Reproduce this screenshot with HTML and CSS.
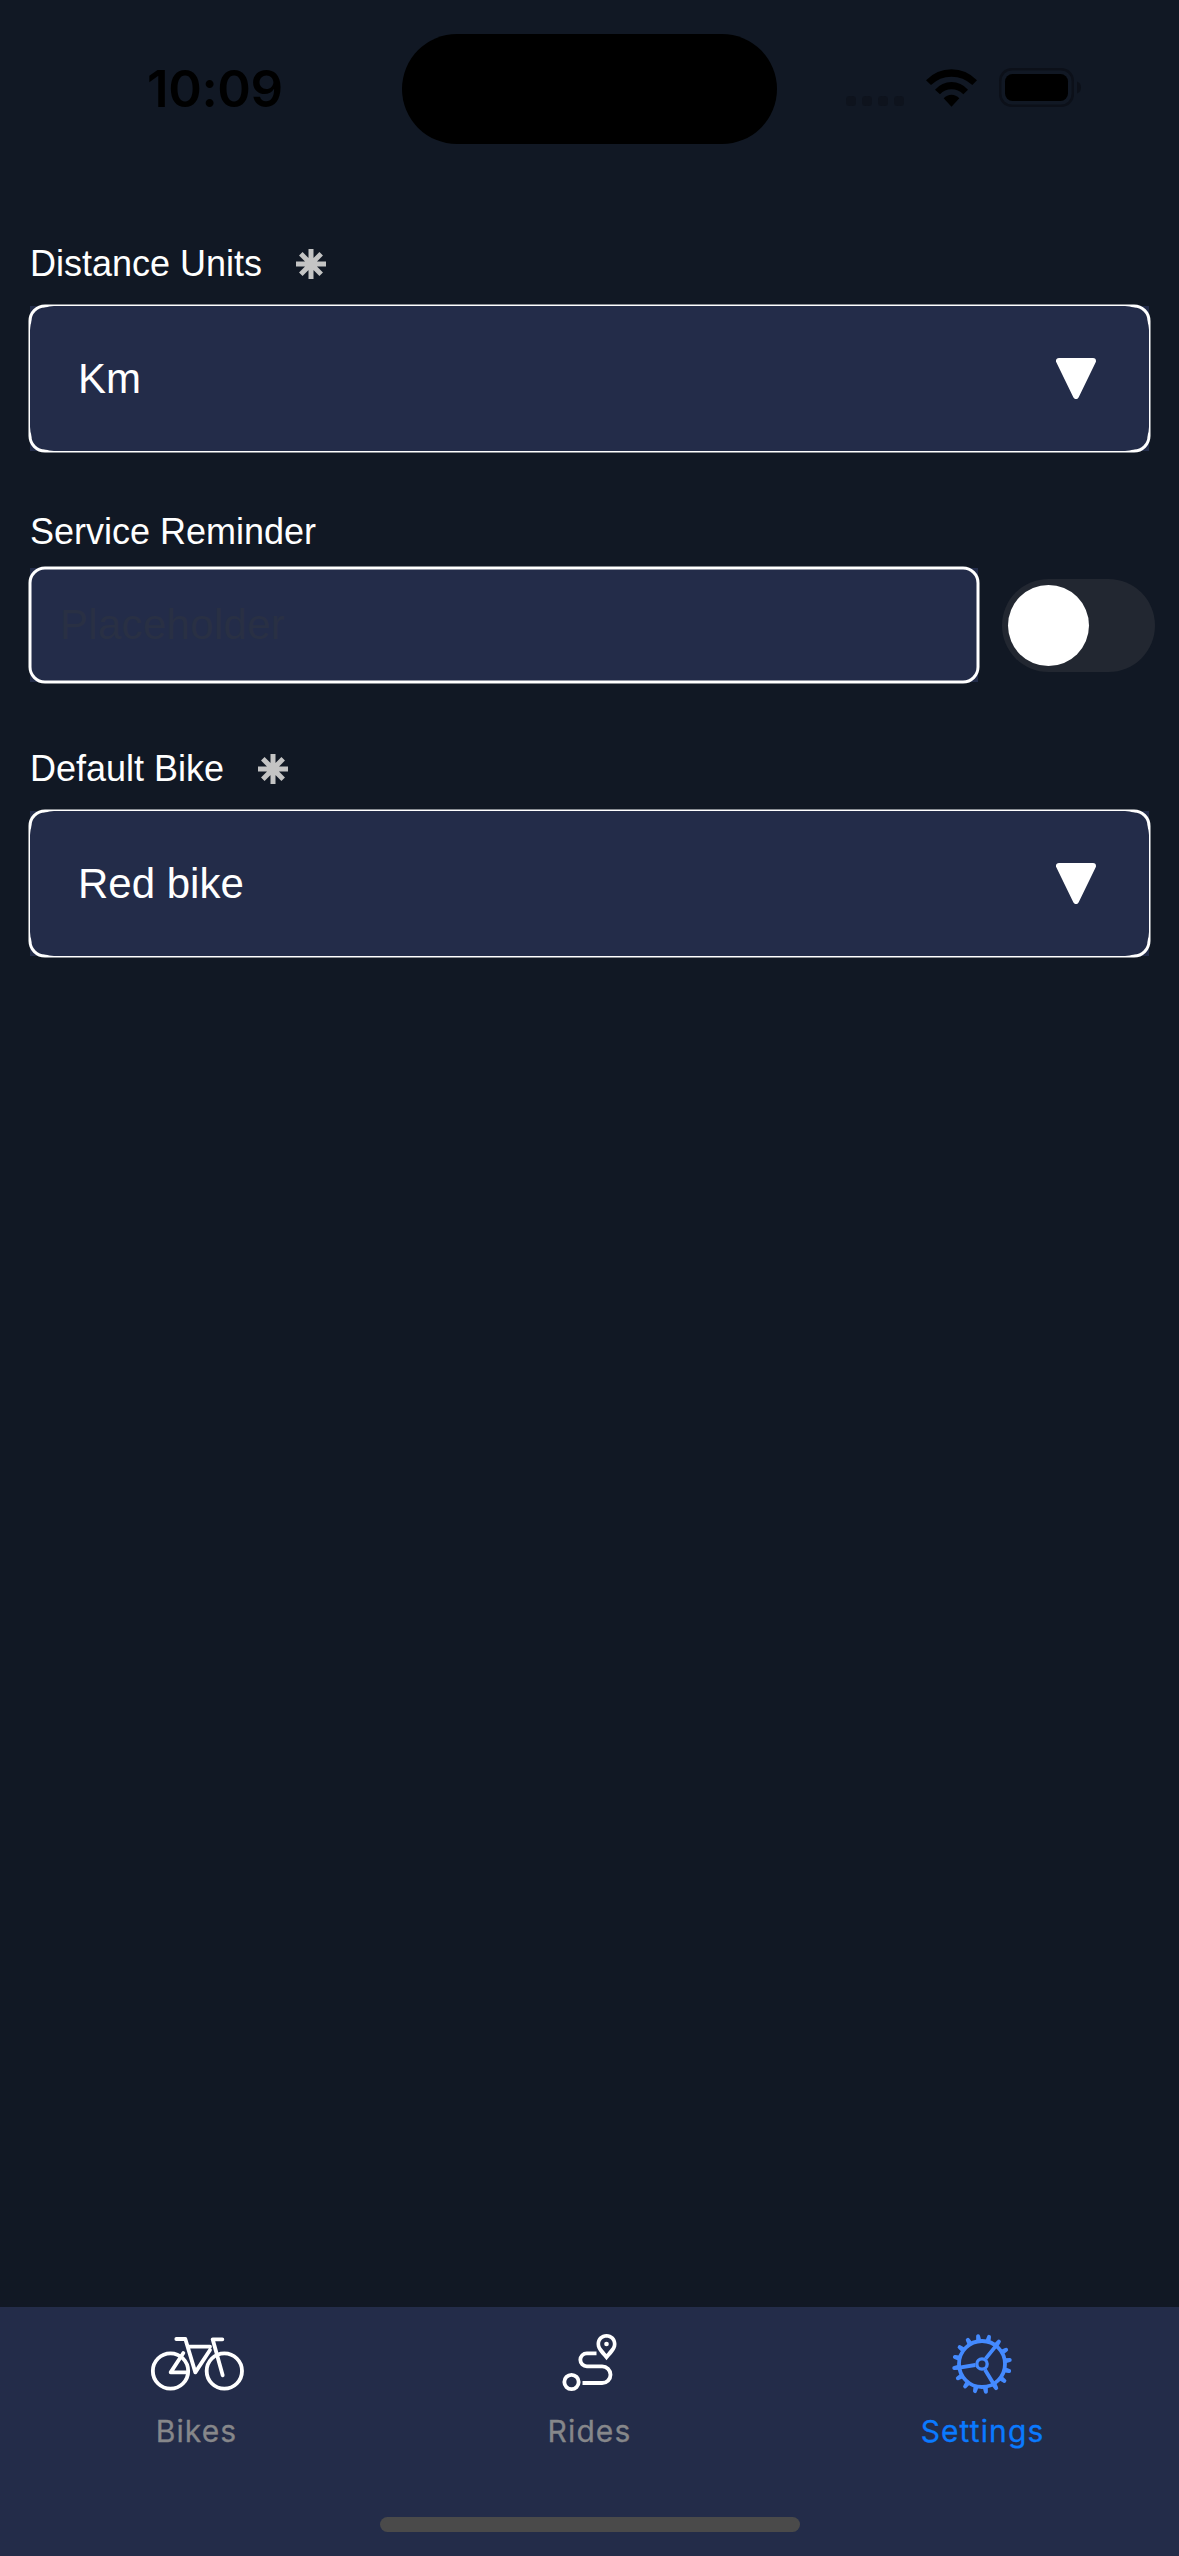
FILE: index.html
```html
<!DOCTYPE html>
<html lang="en">
<head>
<meta charset="utf-8">
<title>Settings</title>
<link rel="stylesheet" href="styles.css">
</head>
<body>
<div class="screen">
  <header class="status">
    <div class="status-side"><span class="time">10:09</span></div>
    <div class="island"></div>
    <div class="status-side status-right">
      <svg class="dots" width="58" height="10" viewBox="0 0 58 10"><rect width="10" height="10" rx="3.5"/><rect x="16" width="10" height="10" rx="3.5"/><rect x="32" width="10" height="10" rx="3.5"/><rect x="48" width="10" height="10" rx="3.5"/></svg>
      <svg class="wifi" width="51" height="38" viewBox="558 146 153 114">
        <path d="M558 180Q590 147 634.500 147T711 180L697 194Q670 169 634.500 169T573 194Z"/>
        <path d="M585 208Q606 185 634.500 185T684 208L670 222Q655 207 634.500 207T600 222Z"/>
        <path d="M611 234Q621 223 634.500 223T658 234L634.500 259Z"/>
      </svg>
      <svg class="battery" width="82" height="39" viewBox="0 0 82 39">
        <rect class="battery-shell" x="1.250" y="1.250" width="72.500" height="36.500" rx="11.500"/>
        <rect x="6" y="6" width="63" height="27" rx="7.500"/>
        <path class="battery-tip" d="M78 13.500Q82 15 82 19.500T78 25.500Z"/>
      </svg>
    </div>
  </header>

  <main class="form">
    <section class="group">
      <div class="label">Distance Units
        <svg class="required" width="30" height="30" viewBox="-15 -15 30 30"><path d="M0-15V15M-15 0H15M-10.200-10.200 10.200 10.200M-10.200 10.200 10.200-10.200"/></svg>
      </div>
      <div class="field select">
        <svg class="frame"><rect class="frame-line" width="100%" height="100%" rx="15"/><rect class="frame-fill" width="100%" height="100%" rx="24"/></svg>
        <span class="value">Km</span>
        <svg class="caret" width="40" height="41" viewBox="0 0 40 41"><path d="M3 3H37L20 38Z"/></svg>
      </div>
    </section>

    <section class="group reminder">
      <div class="label">Service Reminder</div>
      <div class="row">
        <div class="field input">
          <svg class="frame"><rect class="frame-line" width="100%" height="100%" rx="15"/></svg>
          <span class="placeholder">Placeholder</span>
        </div>
        <div class="switch"><div class="knob"></div></div>
      </div>
    </section>

    <section class="group">
      <div class="label">Default Bike
        <svg class="required" width="30" height="30" viewBox="-15 -15 30 30"><path d="M0-15V15M-15 0H15M-10.200-10.200 10.200 10.200M-10.200 10.200 10.200-10.200"/></svg>
      </div>
      <div class="field select">
        <svg class="frame"><rect class="frame-line" width="100%" height="100%" rx="15"/><rect class="frame-fill" width="100%" height="100%" rx="24"/></svg>
        <span class="value">Red bike</span>
        <svg class="caret" width="40" height="41" viewBox="0 0 40 41"><path d="M3 3H37L20 38Z"/></svg>
      </div>
    </section>
  </main>

  <footer class="bottom">
    <nav class="tabs">
      <div class="tab">
        <svg class="icon" viewBox="-9 120 480 195">
          <circle cx="151.500" cy="243" r="53"/><circle cx="313" cy="243" r="53"/>
          <path class="round" d="M169 147H196L226 247L270 180M207 170H270M307 148H278L308 256"/>
          <path class="round" d="M203 247H152L190 189"/>
        </svg>
        <span>Bikes</span>
      </div>
      <div class="tab">
        <svg class="icon" viewBox="-31.5 120 480 195">
          <circle cx="153" cy="276" r="21.500"/>
          <path d="M228 190H199A19.500 19.500 0 0 0 199 229H245A25 25 0 0 1 245 279H186"/>
          <path class="pin" fill-rule="evenodd" d="M258 132C241 132 228 145 228 162C228 182 246 194 258 211C270 194 288 182 288 162C288 145 275 132 258 132ZM258 143C269 143 277 151 277 162C277 172 267 181 258 192C249 181 239 172 239 162C239 151 247 143 258 143Z"/>
          <circle class="pin" cx="258" cy="162" r="7"/>
        </svg>
        <span>Rides</span>
      </div>
      <div class="tab active">
        <svg class="icon" viewBox="9 120 480 195">
          <defs><path id="tooth" class="tooth" d="M68-8L84-6A6 6 0 0 1 84 6L68 8Z"/></defs>
          <g transform="translate(246 222)">
            <circle r="69"/><circle class="hub" r="15.500"/>
            <path d="M11-16L43-56M-20 3L-68 11M9 17L35 60"/>
            <use href="#tooth" transform="rotate(-98)"/><use href="#tooth" transform="rotate(-75.5)"/><use href="#tooth" transform="rotate(-53)"/><use href="#tooth" transform="rotate(-30.5)"/>
            <use href="#tooth" transform="rotate(-8)"/><use href="#tooth" transform="rotate(14.5)"/><use href="#tooth" transform="rotate(37)"/><use href="#tooth" transform="rotate(59.5)"/>
            <use href="#tooth" transform="rotate(82)"/><use href="#tooth" transform="rotate(104.5)"/><use href="#tooth" transform="rotate(127)"/><use href="#tooth" transform="rotate(149.5)"/>
            <use href="#tooth" transform="rotate(172)"/><use href="#tooth" transform="rotate(194.5)"/><use href="#tooth" transform="rotate(217)"/><use href="#tooth" transform="rotate(239.5)"/>
          </g>
        </svg>
        <span>Settings</span>
      </div>
    </nav>
    <div class="home"></div>
  </footer>
</div>
</body>
</html>
```
FILE: styles.css
```css
* { box-sizing: border-box; }
body { margin: 0; background: #111824; }
svg { display: block; flex: none; }

.screen {
  width: 1179px;
  height: 2556px;
  display: flex;
  flex-direction: column;
  background: #111824;
  color: #fff;
  font-family: "Liberation Sans", Arial, sans-serif;
}

/* Status bar */
.status {
  height: 177px;
  padding-top: 34px;
  display: flex;
  align-items: flex-start;
}
.status-side { width: 402px; height: 110px; display: flex; }
.island { width: 375px; height: 110px; border-radius: 55px; background: #000; }
.time {
  padding-left: 147px;
  font: 600 51px/109px Inter, sans-serif;
  letter-spacing: -0.4px;
  color: #000;
  white-space: nowrap;
}
.status-right { padding-left: 69px; align-items: flex-start; }
.dots { margin-top: 62px; fill: #0e131d; }
.wifi { margin: 35px 0 0 22px; }
.battery { margin: 34px 0 0 22px; }
.battery-shell { fill: none; stroke: #0c1019; stroke-width: 2.5; }
.battery-tip { fill: #0c1019; }

/* Form */
.form {
  flex: 1;
  padding: 67px 24px 0 30px;
  display: flex;
  flex-direction: column;
}
.group { display: flex; flex-direction: column; gap: 22px; }
.reminder { margin: 61px 0 67px; gap: 16px; }
.label {
  height: 40px;
  display: flex;
  align-items: center;
  gap: 34px;
  font-size: 36px;
  line-height: 40px;
  white-space: nowrap;
}
.required { fill: none; stroke: #c4c4c4; stroke-width: 5; }
.field {
  position: relative;
  display: flex;
  align-items: center;
  background: #232c49;
  font-size: 42px;
  line-height: 48px;
}
.frame {
  position: absolute;
  inset: 0;
  width: 100%;
  height: 100%;
  overflow: visible;
}
.frame-line { fill: none; stroke: #fff; stroke-width: 3; }
.frame-fill { fill: #232c49; }
.select {
  width: 1119px;
  height: 145px;
  padding: 0 53px 0 48px;
  justify-content: space-between;
}
.value, .caret { position: relative; }
.caret { fill: #fff; stroke: #fff; stroke-width: 6; stroke-linejoin: round; }
.row { display: flex; align-items: center; justify-content: space-between; }
.input { width: 948px; height: 114px; padding-left: 30px; }
.placeholder { color: #293044; letter-spacing: 0.3px; }
.switch {
  width: 153px;
  height: 93px;
  padding: 6px;
  border-radius: 47px;
  background: #222731;
}
.knob { width: 81px; height: 81px; border-radius: 50%; background: #fff; }

/* Tab bar */
.bottom {
  height: 249px;
  padding: 23px 0 24px;
  display: flex;
  flex-direction: column;
  align-items: center;
  justify-content: space-between;
  background: #232c49;
}
.tabs { width: 100%; display: grid; grid-template-columns: repeat(3, 1fr); }
.tab {
  display: flex;
  flex-direction: column;
  align-items: center;
  gap: 18px;
  font: 400 30px/37px Inter, sans-serif;
  letter-spacing: 1.1px;
  color: #86878a;
  -webkit-text-stroke: 0.3px currentColor;
}
.tab.active { color: #0a7aff; }
.icon { width: 160px; height: 65px; fill: none; stroke: #fff; stroke-width: 11.5; }
.round { stroke-linecap: round; stroke-linejoin: round; }
.pin { fill: #fff; stroke: none; }
.active .icon { stroke: #448aff; }
.tooth { fill: #448aff; stroke: none; }
.hub { stroke-width: 10; }
.home { width: 420px; height: 15px; border-radius: 8px; background: #4a4a4a; }
```
